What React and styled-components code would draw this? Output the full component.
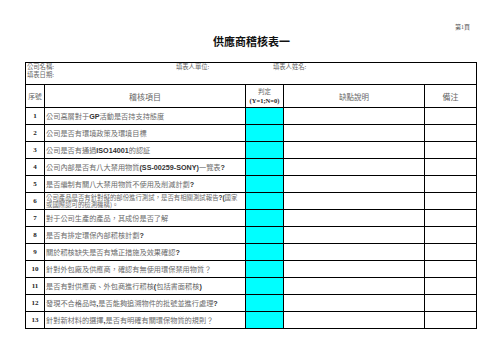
import React from "react";
import styled, { createGlobalStyle } from "styled-components";

const Global = createGlobalStyle`
  html, body { margin: 0; padding: 0; background: #fff; }
  body { width: 503px; height: 356px; overflow: hidden; }
`;

const CJK = `"Noto Sans CJK TC", "Noto Sans CJK SC", sans-serif`;

const Page = styled.div`
  box-sizing: border-box;
  width: 503px;
  height: 356px;
  padding-top: 23px;
  font-family: ${CJK};
`;

const PageNo = styled.div`
  text-align: right;
  padding-right: 33px;
  font-size: 6px;
  line-height: 8px;
  color: #555;
  font-family: "Liberation Serif", ${CJK};
`;

const Title = styled.h1`
  margin: 3px 0 0;
  text-align: center;
  font-size: 11px;
  line-height: 14px;
  font-weight: 700;
  color: #111;
  letter-spacing: 0;
`;

const Sheet = styled.div`
  box-sizing: border-box;
  margin: 14px 0 0 25px;
  width: 452px;
  border-left: 1px solid #000;
  border-top: 1px solid #000;
`;

const InfoCell = styled.div`
  box-sizing: border-box;
  height: 22px;
  border-right: 1px solid #000;
  border-bottom: 1px solid #000;
  padding-left: 1px;
  font-size: 6.3px;
  line-height: 8px;
  color: #666;
`;

const InfoLine = styled.div`
  display: grid;
  grid-template-columns: 149px 97px auto;
`;

const Row = styled.div`
  display: grid;
  grid-template-columns: 19px 201px 38px 141px 52px;
  height: ${(p) => p.$h}px;
`;

const Cell = styled.div`
  box-sizing: border-box;
  border-right: 1px solid #000;
  border-bottom: 1px solid #000;
  background: ${(p) => (p.$fill ? "#00ffff" : "#fff")};
  display: flex;
  flex-direction: column;
  justify-content: center;
  align-items: ${(p) => (p.$left ? "flex-start" : "center")};
  padding-left: ${(p) => (p.$left ? "1px" : "0")};
  overflow: hidden;
`;

const HeadText = styled.span`
  font-size: ${(p) => p.$size || 7.5}px;
  line-height: 9px;
  color: #666;
  white-space: nowrap;
`;

const JudgeSub = styled.span`
  font-family: "Liberation Serif", serif;
  font-weight: 700;
  font-size: 6.5px;
  line-height: 9px;
  color: #222;
  white-space: nowrap;
`;

const Num = styled.span`
  font-family: "Liberation Serif", serif;
  font-weight: 700;
  font-size: 7px;
  color: #222;
`;

const ItemText = styled.span`
  font-size: ${(p) => (p.$small ? 6.4 : 7.2)}px;
  line-height: ${(p) => (p.$small ? 7.5 : 9)}px;
  color: #6a6a6a;
  white-space: nowrap;
`;

const B = styled.b`
  font-family: "Liberation Sans", ${CJK};
  font-weight: 700;
  color: #333;
`;

const items = [
  <>公司高層對于<B>GP</B>活動是否持支持態度</>,
  <>公司是否有環境政策及環境目標</>,
  <>公司是否有通過<B>ISO14001</B>的認証</>,
  <>公司內部是否有八大禁用物質<B>(SS-00259-SONY)</B>一覽表<B>?</B></>,
  <>是否編制有關八大禁用物質不使用及削減計劃<B>?</B></>,
  null,
  <>對于公司生產的產品，其成份是否了解</>,
  <>是否有排定環保內部稽核計劃<B>?</B></>,
  <>關於稽核缺失是否有矯正措施及效果確認<B>?</B></>,
  <>針對外包廠及供應商，確認有無使用環保禁用物質？</>,
  <>是否有對供應商、外包商進行稽核<B>(</B>包括書面稽核<B>)</B></>,
  <>發現不合格品時<B>,</B>是否能夠追溯物件的批號並進行處理<B>?</B></>,
  <>針對新材料的選擇<B>,</B>是否有明確有關環保物質的規則？</>,
];

export default function App() {
  return (
    <>
      <Global />
      <Page>
        <PageNo>第1頁</PageNo>
        <Title>供應商稽核表一</Title>
        <Sheet>
          <InfoCell>
            <InfoLine>
              <span>公司名稱:</span>
              <span>填表人單位:</span>
              <span>填表人姓名:</span>
            </InfoLine>
            <InfoLine>
              <span>填表日期:</span>
            </InfoLine>
          </InfoCell>
          <Row $h={23}>
            <Cell><HeadText $size={6.8}>序號</HeadText></Cell>
            <Cell><HeadText $size={8}>稽核項目</HeadText></Cell>
            <Cell>
              <HeadText $size={6.5}>判定</HeadText>
              <JudgeSub>(Y=1;N=0)</JudgeSub>
            </Cell>
            <Cell><HeadText $size={7.5}>缺點說明</HeadText></Cell>
            <Cell><HeadText $size={8}>備注</HeadText></Cell>
          </Row>
          {items.map((it, i) => (
            <Row $h={17} key={i}>
              <Cell><Num>{i + 1}</Num></Cell>
              <Cell $left>
                {i === 5 ? (
                  <>
                    <ItemText $small>
                      公司產品是否有針對擬的部份進行測試，是否有相關測試報告<B>?(</B>國家
                    </ItemText>
                    <ItemText $small>或國際認可的檢測機構)。</ItemText>
                  </>
                ) : (
                  <ItemText>{it}</ItemText>
                )}
              </Cell>
              <Cell $fill />
              <Cell />
              <Cell />
            </Row>
          ))}
        </Sheet>
      </Page>
    </>
  );
}
